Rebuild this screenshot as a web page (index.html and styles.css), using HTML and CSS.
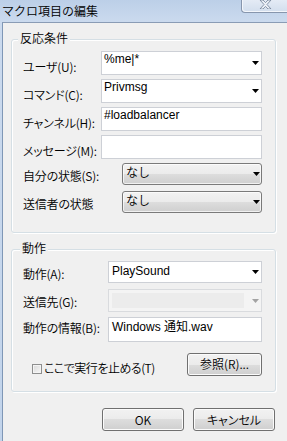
FILE: index.html
```html
<!DOCTYPE html>
<html lang="ja">
<head>
<meta charset="utf-8">
<title>マクロ項目の編集</title>
<link rel="stylesheet" href="styles.css">
</head>
<body>
<div class="window">
  <div class="titlebar">
    <span class="title">マクロ項目の編集</span>
    <div class="close">
      <svg width="13" height="9" viewBox="0 0 13 9"><path d="M1 0h3l2.5 2.6L9 0h3L8 4.5 12 9H9L6.5 6.4 4 9H1l4-4.5z" fill="#eef2f8" stroke="#6f7f96" stroke-width="0.8"/></svg>
    </div>
  </div>
  <div class="client">
    <div class="group g1">
      <div class="group-title">反応条件</div>
      <div class="row">
        <div class="label">ユーザ(U):</div>
        <div class="field combo"><span class="val">%me|*</span><svg class="arrow" width="7" height="4" viewBox="0 0 7 4"><path d="M0 0h7L3.5 4z"/></svg></div>
      </div>
      <div class="row">
        <div class="label">コマンド(C):</div>
        <div class="field combo"><span class="val">Privmsg</span><svg class="arrow" width="7" height="4" viewBox="0 0 7 4"><path d="M0 0h7L3.5 4z"/></svg></div>
      </div>
      <div class="row">
        <div class="label">チャンネル(H):</div>
        <div class="field edit"><span class="val">#loadbalancer</span></div>
      </div>
      <div class="row">
        <div class="label">メッセージ(M):</div>
        <div class="field edit"><span class="val"></span></div>
      </div>
      <div class="row">
        <div class="label wide">自分の状態(S):</div>
        <div class="field list"><span class="val jp">なし</span><svg class="arrow" width="7" height="4" viewBox="0 0 7 4"><path d="M0 0h7L3.5 4z"/></svg></div>
      </div>
      <div class="row">
        <div class="label wide">送信者の状態</div>
        <div class="field list"><span class="val jp">なし</span><svg class="arrow" width="7" height="4" viewBox="0 0 7 4"><path d="M0 0h7L3.5 4z"/></svg></div>
      </div>
    </div>

    <div class="group g2">
      <div class="group-title">動作</div>
      <div class="row">
        <div class="label l2">動作(A):</div>
        <div class="field combo c2"><span class="val">PlaySound</span><svg class="arrow" width="7" height="4" viewBox="0 0 7 4"><path d="M0 0h7L3.5 4z"/></svg></div>
      </div>
      <div class="row">
        <div class="label l2">送信先(G):</div>
        <div class="field combo c2 disabled"><span class="inner"></span><svg class="arrow" width="7" height="4" viewBox="0 0 7 4"><path d="M0 0h7L3.5 4z"/></svg></div>
      </div>
      <div class="row">
        <div class="label l2 l3">動作の情報(B):</div>
        <div class="field edit e2"><span class="val">Windows 通知.wav</span></div>
      </div>
      <div class="checkrow">
        <span class="check"></span>
        <span class="checklabel">ここで実行を止める(T)</span>
        <div class="btn browse">参照(R)...</div>
      </div>
    </div>

    <div class="buttons">
      <div class="btn dlg">OK</div>
      <div class="btn dlg">キャンセル</div>
    </div>
  </div>
</div>
</body>
</html>
```

FILE: styles.css
```css
html, body {
  margin: 0;
  padding: 0;
}

body {
  width: 287px;
  height: 441px;
  overflow: hidden;
  font-family: "Noto Sans CJK JP", sans-serif;
  font-size: 12px;
  font-weight: 350;
  font-feature-settings: "palt";
  color: #000;
}

.window {
  width: 287px;
  height: 441px;
  display: flex;
  flex-direction: column;
  background: linear-gradient(#bccfe8 0px, #cbdaee 22px, #c2d4eb 441px);
}

.titlebar {
  height: 22px;
  flex: none;
  display: flex;
  align-items: flex-start;
}

.title {
  margin: 3px 0 0 2px;
  line-height: 16px;
  font-size: 12px;
  font-feature-settings: normal;
  color: #000;
}

.close {
  margin-left: auto;
  width: 46px;
  height: 13px;
  border-left: 1px solid #8796ad;
  border-bottom: 1px solid #8796ad;
  border-bottom-left-radius: 4px;
  background: linear-gradient(#e4ebf5, #d2deed);
  box-shadow: inset 1px -1px 0 #f3f6fb;
  display: flex;
  justify-content: center;
  align-items: flex-start;
  padding-left: 2px;
  box-sizing: border-box;
}

.client {
  flex: 1;
  margin-left: 2px;
  border-left: 1px solid #7f97b6;
  border-top: 1px solid #8a9cb5;
  background: #f0f0f0;
  padding: 16px 11px 0 8px;
  display: flex;
  flex-direction: column;
}

.group {
  border: 1px solid #d5dfe5;
  border-radius: 3px;
  box-shadow: inset 1px 1px 0 #fff, 1px 1px 0 #fff;
  padding: 0 13px 13px 11px;
  display: flex;
  flex-direction: column;
}

.g2 {
  margin-top: 16px;
  padding-bottom: 15px;
}

.group-title {
  align-self: flex-start;
  margin: -9px 0 6px -5px;
  padding: 0 2px;
  background: #f0f0f0;
  line-height: 14px;
}

.g2 .group-title {
  margin-left: -3px;
}

.row {
  display: flex;
  height: 28px;
  align-items: flex-start;
}

.label {
  width: 78px;
  flex: none;
  padding-top: 9px;
  line-height: 14px;
  white-space: nowrap;
  letter-spacing: -0.2px;
}

.label.wide {
  width: 99px;
  padding-top: 6px;
}

.label.l2 {
  width: 85px;
  padding-top: 6px;
}

.label.l3 {
  padding-top: 4px;
}

.field {
  flex: 1;
  height: 24px;
  box-sizing: border-box;
  border: 1px solid #cdd0d6;
  background: #fff;
  display: flex;
  align-items: center;
  padding: 0 2px 0 2px;
}

.val {
  flex: 1;
  align-self: flex-start;
  font-family: "Liberation Sans", "Noto Sans CJK JP", sans-serif;
  font-size: 12px;
  font-weight: 400;
  font-feature-settings: normal;
  line-height: 14px;
  padding-top: 0;
  white-space: nowrap;
}

.val.jp {
  font-family: "Noto Sans CJK JP", sans-serif;
  font-weight: 350;
  padding-top: 1px;
  padding-left: 1px;
}

.c2 {
  height: 22px;
}

.c2 .val,
.e2 .val {
  padding-top: 2px;
  padding-left: 1px;
}

.e2 {
  height: 25px;
}

.arrow {
  flex: none;
  fill: #000;
  margin-right: 0;
}

.list {
  height: 22px;
  border: 1px solid #7a7a7a;
  border-radius: 3px;
  background: linear-gradient(#f2f2f2 0%, #ebebeb 50%, #dddddd 50%, #cfcfcf 100%);
  box-shadow: inset 0 0 0 1px rgba(255,255,255,0.7);
  padding-right: 1px;
}

.disabled {
  height: 23px;
  background: #f4f4f4;
  border-color: #d9dbde;
}

.disabled .inner {
  flex: 1;
  height: 15px;
  margin: 0 8px 0 1px;
  background: #ececec;
}

.disabled .arrow {
  fill: #a3a3a3;
}

.checkrow {
  display: flex;
  align-items: flex-start;
  height: 23px;
  margin-top: 8px;
}

.check {
  width: 10px;
  height: 10px;
  box-sizing: border-box;
  margin: 11px 0 0 9px;
  border: 1px solid #8e8f8f;
  background: linear-gradient(135deg, #d9d9d9, #f7f7f7);
  box-shadow: inset 0 0 0 1px #f4f4f4;
}

.checklabel {
  margin-left: 2px;
  padding-top: 8px;
  line-height: 14px;
  white-space: nowrap;
  letter-spacing: -0.5px;
}

.btn {
  height: 23px;
  box-sizing: border-box;
  border: 1px solid #707070;
  border-radius: 3px;
  background: linear-gradient(#f2f2f2 0%, #ebebeb 50%, #dddddd 50%, #cfcfcf 100%);
  box-shadow: inset 0 0 0 1px #fbfbfb;
  display: flex;
  align-items: center;
  justify-content: center;
  line-height: 14px;
  white-space: nowrap;
}

.browse {
  margin-left: auto;
  width: 75px;
  padding-bottom: 2px;
}

.buttons {
  display: flex;
  justify-content: flex-end;
  gap: 9px;
  margin-top: 16px;
  padding-right: 1px;
}

.dlg {
  width: 82px;
}
```
